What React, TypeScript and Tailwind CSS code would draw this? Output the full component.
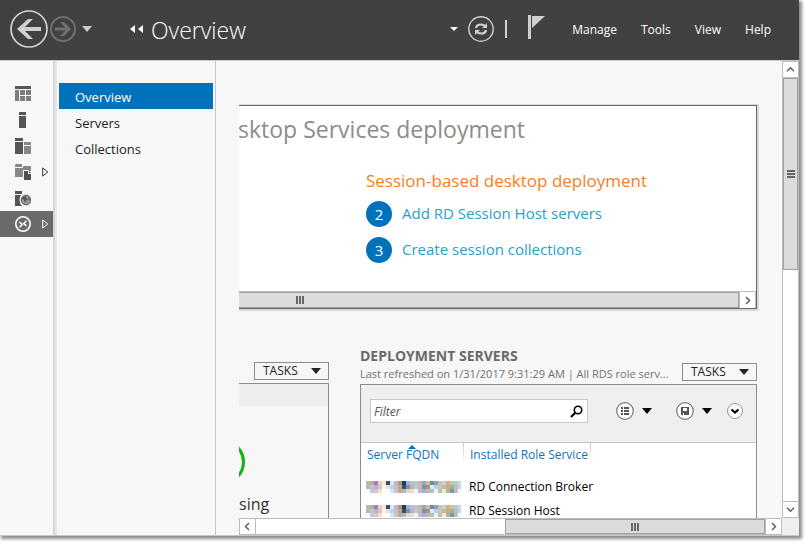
import React from "react";

const MOSAIC: string[][] = [
  ["#bbb9a3", "#b9ae98", "#a77cb8", "#e8d2c0", "#f3ead9", "#35506b", "#d8e6f4", "#bdb9c4", "#a99a80", "#1f3d5c", "#9db2dc", "#b9bfc9", "#b9c4cc", "#d3b6ac", "#8fa9b6", "#cfb9ac", "#6f8da0", "#8fa3b8", "#c9c3bb", "#bcd3e4", "#dfae78", "#c6c6ad", "#bccbc6", "#bcd9ef"],
  ["#bbb9a3", "#bcc6dd", "#c4abcb", "#d7c3cd", "#fbf6ea", "#e6e0ee", "#bcd2ee", "#c9c1bd", "#c9a57e", "#33506c", "#7d94a8", "#b6b6b9", "#b7c9dd", "#d8b2a4", "#649ab4", "#b98f78", "#d7ecf4", "#bccfe6", "#cbc8b5", "#bcb9a5", "#d8a36c", "#8db4bc", "#c0c0ae", "#bcd9ef"],
  ["#fbfbee", "#bccbe2", "#dcc0cc", "#f2e0cc", "#ffffff", "#fbfbe9", "#d6e7fa", "#c4c4d8", "#c7a58e", "#b3b9c2", "#e8d8c8", "#ecdcc6", "#e8fbfb", "#c4b8da", "#b6aaca", "#bcbcbc", "#bcbcbc", "#e6f7f7", "#c1c1b1", "#ececdc", "#b4b795", "#7b9b9b", "#c0c0c0", "#f6f6f6"],
];

function Mosaic() {
  return (
    <svg width="95" height="12" viewBox="0 0 95 12" shapeRendering="crispEdges" className="block" aria-hidden="true">
      {MOSAIC.map((row, y) => row.map((c, x) => <rect key={`${x}-${y}`} x={x * 4} y={y * 4} width="4" height="4" fill={c} />))}
    </svg>
  );
}

function Tri({ className = "" }: { className?: string }) {
  return (
    <svg width="10" height="6" viewBox="0 0 10 6" className={`shrink-0 ${className}`} aria-hidden="true">
      <path d="M0 0h10L5 6z" fill="currentColor" />
    </svg>
  );
}

function Chevron({ d }: { d: string }) {
  return (
    <svg width="9" height="9" viewBox="0 0 9 9" fill="none" stroke="#606060" strokeWidth="1.5" aria-hidden="true">
      <path d={d} />
    </svg>
  );
}

const LEFT = "M6 1L2.5 4.5L6 8";
const RIGHT = "M3 1L6.5 4.5L3 8";
const UP = "M1 6.2L4.5 2.7L8 6.2";
const DOWN = "M1 2.8L4.5 6.3L8 2.8";

function ScrollButton({ d, label, className = "" }: { d: string; label: string; className?: string }) {
  return (
    <button aria-label={label} className={`flex shrink-0 items-center justify-center border border-[#bcbcbc] bg-white ${className}`}>
      <Chevron d={d} />
    </button>
  );
}

function Grip({ vertical = false }: { vertical?: boolean }) {
  return (
    <svg width="8" height="8" viewBox="0 0 8 8" className={vertical ? "rotate-90" : ""} shapeRendering="crispEdges" aria-hidden="true">
      <path d="M0 0h2v8h-2zM3 0h2v8h-2zM6 0h2v8h-2z" fill="#666" />
    </svg>
  );
}

function TasksButton() {
  return (
    <button className="flex h-[18px] w-[75px] shrink-0 items-center justify-between border border-[#8c8c8c] pr-[7px] pl-2 text-[12px] leading-4 text-[#222]">
      TASKS
      <Tri className="text-[#222]" />
    </button>
  );
}

function DashboardIcon() {
  return (
    <svg width="16" height="16" viewBox="0 0 16 16" shapeRendering="crispEdges">
      <path d="M0 0h16v3H0z" fill="#555" />
      <path d="M0 4h4v11H0zM5 4h5v5H5zM11 4h5v5h-5zM5 10h5v5H5zM11 10h5v5h-5z" fill="#7d7d7d" />
    </svg>
  );
}
function ServerIcon() {
  return (
    <svg width="16" height="16" viewBox="0 0 16 16" shapeRendering="crispEdges">
      <path d="M4 0h7v3H4zM4 4h7v12H4z" fill="#555" />
    </svg>
  );
}
function ServersIcon() {
  return (
    <svg width="16" height="16" viewBox="0 0 16 16" shapeRendering="crispEdges">
      <path d="M0 0h8v3H0zM0 4h8v12H0z" fill="#555" />
      <path d="M9 4h7v3H9zM9 8h7v8H9z" fill="#868686" />
    </svg>
  );
}
function FilesIcon() {
  return (
    <svg width="16" height="16" viewBox="0 0 16 16">
      <path d="M1 0h6v3H0V1zM0 4h8V2h8v5h-2l-1-1H8v7H0z" fill="#868686" />
      <path d="M9 7h4v3h3v6H9zM14 7l2 2h-2z" fill="#505050" />
    </svg>
  );
}
function GlobeServerIcon() {
  return (
    <svg width="16" height="16" viewBox="0 0 16 16">
      <path d="M0 1h7v3H0zM0 5h6C4 8 4 13 7 16H0z" fill="#555" />
      <circle cx="11" cy="10" r="4.8" fill="#9a9a9a" stroke="#555" strokeWidth="1" />
      <path d="M8 7l3-1v2l2 1-2 2-1 2-1-3-2-1zM13 7l2 2-1 2z" fill="#555" />
    </svg>
  );
}
function RemoteIcon() {
  return (
    <svg width="16" height="16" viewBox="0 0 16 16" fill="none" stroke="#fff">
      <circle cx="8" cy="8" r="7.2" strokeWidth="1.6" />
      <path d="M4.500 6L7.300 8.600L4.500 11.200M11.500 4.800L8.700 7.400L11.500 10" strokeWidth="1.500" />
    </svg>
  );
}

const RAIL = [
  { label: "Dashboard", icon: <DashboardIcon />, more: false, on: false },
  { label: "Local Server", icon: <ServerIcon />, more: false, on: false },
  { label: "All Servers", icon: <ServersIcon />, more: false, on: false },
  { label: "File and Storage Services", icon: <FilesIcon />, more: true, on: false },
  { label: "IIS", icon: <GlobeServerIcon />, more: false, on: false },
  { label: "Remote Desktop Services", icon: <RemoteIcon />, more: true, on: true },
];

function Header() {
  return (
    <header className="flex h-[61px] shrink-0 items-center border-b border-[#cccccc] bg-[#414141] pb-[2px] text-white">
      <button aria-label="Back" className="ml-[9px]">
        <svg width="40" height="40" viewBox="0 0 40 40" className="block">
          <circle cx="20" cy="20" r="18" fill="none" stroke="#d4d4d4" strokeWidth="1.7" />
          <path d="M8 20L19 10H24L16 18H32V22H16L24 30H19z" fill="#d0d0d0" />
        </svg>
      </button>
      <button aria-label="Forward">
        <svg width="28" height="28" viewBox="0 0 28 28" className="block">
          <circle cx="14" cy="14" r="12" fill="none" stroke="#6f6f6f" strokeWidth="2" />
          <path d="M22 14L15 7H11L16.500 12.500H6V15.500H16.500L11 21H15z" fill="#707070" />
        </svg>
      </button>
      <button aria-label="History" className="ml-[5px] text-[#cccccc]">
        <Tri />
      </button>
      <svg width="14" height="8" viewBox="0 0 14 8" className="ml-[38px]" aria-hidden="true">
        <path d="M5 0v8L0 4zM13 0v8L8 4z" fill="#fff" />
      </svg>
      <h1 className="ml-[7px] pt-[2px] text-[23px] leading-8 font-light">Overview</h1>
      <div className="ml-auto flex items-center">
        <button aria-label="Locations">
          <svg width="8" height="4" viewBox="0 0 8 4" className="block">
            <path d="M0 0h8L4 4z" fill="#fff" />
          </svg>
        </button>
        <button aria-label="Refresh" className="ml-[9px]">
          <svg width="28" height="28" viewBox="0 0 28 28" fill="none" stroke="#d0d0d0" className="block">
            <circle cx="14" cy="14" r="12.200" strokeWidth="1.400" />
            <path d="M9 13Q9.500 9.500 14 9.500Q16.500 9.500 18.500 11.500M19 15Q18.500 18.500 14 18.500Q11.500 18.500 9.500 16.500" strokeWidth="2.200" />
            <path d="M20 8v5h-5zM8 20v-5h5z" fill="#d0d0d0" stroke="none" />
          </svg>
        </button>
        <span className="ml-[10px] h-[18px] w-[2px] bg-[#d0d0d0]" />
        <button aria-label="Notifications" className="ml-5">
          <svg width="20" height="28" viewBox="0 0 20 28" className="block">
            <path d="M1 0h3v24H1zM5 1h13L5 13z" fill="#d0d0d0" />
          </svg>
        </button>
        <nav className="ml-[25px] flex gap-6 pt-[2px] pr-7 text-[12px] leading-4">
          <button>Manage</button>
          <button>Tools</button>
          <button>View</button>
          <button>Help</button>
        </nav>
      </div>
    </header>
  );
}

function Quick() {
  return (
    <section className="mr-[23px] border-y border-r-2 border-b-2 border-[#d9d9d9]">
      <div className="border-y border-r border-[#666] bg-white">
        <div className="h-[185px]">
          <h2 className="flex w-[286px] justify-end overflow-hidden pt-[7px] text-[23px] leading-8 whitespace-nowrap text-[#8c8c8c]">
            Desktop Services deployment
          </h2>
          <div className="pt-6 pl-[127px]">
            <h3 className="text-[17px] leading-6 text-[#fb7d1e]">Session-based desktop deployment</h3>
            <ol className="flex flex-col gap-[10px] pt-2 text-[15px] leading-6 text-[#2a9fc9]">
              <li className="flex h-[26px] items-center gap-[10px]">
                <span className="flex size-[26px] items-center justify-center rounded-full bg-[#0072bc] pb-px text-white">2</span>
                <a href="#hosts" className="pb-[2px]">Add RD Session Host servers</a>
              </li>
              <li className="flex h-[26px] items-center gap-[10px]">
                <span className="flex size-[26px] items-center justify-center rounded-full bg-[#0072bc] pb-px text-white">3</span>
                <a href="#collections" className="pb-[2px]">Create session collections</a>
              </li>
            </ol>
          </div>
        </div>
        <div className="flex h-[17px] border-t border-[#bcbcbc]">
          <div className="flex flex-1 items-center border-y border-r border-[#a0a0a0] bg-[#dcdcdc] pl-[57px]">
            <Grip />
          </div>
          <ScrollButton d={RIGHT} label="Scroll steps right" className="w-[17px] border-y-0" />
        </div>
      </div>
    </section>
  );
}

function Status() {
  return (
    <section className="flex w-[90px] shrink-0 flex-col">
      <div className="flex h-[38px] shrink-0 items-end justify-end pb-[3px]">
        <TasksButton />
      </div>
      <div className="flex-1 border-t border-r border-[#8c8c8c]">
        <div className="h-[22px] bg-[#eeeeee]" />
        <svg width="8" height="52" viewBox="18 0 8 52" className="mt-[30px] block" aria-hidden="true">
          <circle cx="1" cy="26" r="21.500" fill="none" stroke="#10b410" strokeWidth="3" />
        </svg>
        <p className="pt-1 text-[16px] leading-6 text-[#333]">sing</p>
      </div>
    </section>
  );
}

function Servers() {
  return (
    <section className="flex min-w-0 flex-1 flex-col">
      <div className="flex h-[38px] shrink-0 items-end justify-between gap-1">
        <div className="min-w-0">
          <h2 className="text-[14px] leading-[18px] font-bold whitespace-nowrap text-[#6a6a6a]">DEPLOYMENT SERVERS</h2>
          <p className="truncate text-[11px] leading-[18px] text-[#707070]">
            Last refreshed on 1/31/2017 9:31:29 AM <span className="text-[#4f8f8f]">|</span> All RDS role serv...
          </p>
        </div>
        <div className="pb-[2px]">
          <TasksButton />
        </div>
      </div>
      <div className="mt-px flex-1 border-t border-r border-l border-[#8c8c8c] bg-white">
        <div className="flex h-[58px] items-center border-b border-[#c4c4c4] bg-[#efefef] pb-[5px] pl-[9px]">
          <div className="flex h-6 w-[218px] items-center border border-[#c8c8c8] bg-white pr-1">
            <input aria-label="Filter" placeholder="Filter" className="h-full min-w-0 flex-1 pl-[3px] text-[12px] italic outline-none placeholder:text-[#555]" />
            <svg width="13" height="13" viewBox="0 0 13 13" fill="none" stroke="#000" aria-hidden="true">
              <circle cx="8" cy="5" r="3.700" strokeWidth="1.600" />
              <path d="M5.500 7.500L1 12" strokeWidth="2.200" />
            </svg>
          </div>
          <button aria-label="Saved filters" className="ml-7">
            <svg width="18" height="18" viewBox="0 0 18 18" className="block">
              <circle cx="9" cy="9" r="8.300" fill="#fff" stroke="#777" strokeWidth="1.200" />
              <path d="M5 5h2v2H5zM8 5h5v2H8zM5 8h2v2H5zM8 8h5v2H8zM5 11h2v2H5zM8 11h5v2H8z" fill="#555" />
            </svg>
          </button>
          <Tri className="ml-2" />
          <button aria-label="Save filter" className="ml-6">
            <svg width="18" height="18" viewBox="0 0 18 18" className="block">
              <circle cx="9" cy="9" r="8.300" fill="#fff" stroke="#777" strokeWidth="1.200" />
              <path fillRule="evenodd" d="M5 5h8v8H5zM7 6v3h4V6zM7 11v2h1v-2z" fill="#555" />
            </svg>
          </button>
          <Tri className="ml-2" />
          <button aria-label="Expand" className="ml-[14px]">
            <svg width="18" height="18" viewBox="0 0 18 18" className="block">
              <circle cx="9" cy="9" r="7.500" fill="#fff" stroke="#999" />
              <path d="M5.500 7.500L9 10.500L12.500 7.500" fill="none" stroke="#000" strokeWidth="2.200" />
            </svg>
          </button>
        </div>
        <table className="w-full table-fixed text-left text-[12px] leading-4">
          <thead>
            <tr className="h-8 align-top font-normal text-[#1173bb]">
              <th className="relative w-[102px] pt-1 pl-[6px] font-normal whitespace-nowrap">
                <svg width="8" height="4" viewBox="0 0 8 4" className="absolute top-[2px] left-[47px]" aria-hidden="true">
                  <path d="M4 0L8 4H0z" fill="#0072bc" />
                </svg>
                Server FQDN
              </th>
              <th className="w-[128px] font-normal whitespace-nowrap">
                <div className="h-5 bg-linear-to-b from-[#c8c8c8] to-white px-px">
                  <div className="h-full bg-white pt-1 pl-[6px]">Installed Role Service</div>
                </div>
              </th>
              <th aria-label="More" />
            </tr>
          </thead>
          <tbody className="text-black">
            <tr className="h-6">
              <td className="pl-[5px]"><Mosaic /></td>
              <td className="pl-[6px] whitespace-nowrap">RD Connection Broker</td>
              <td />
            </tr>
            <tr className="h-6">
              <td className="pl-[5px]"><Mosaic /></td>
              <td className="pl-[6px] whitespace-nowrap">RD Session Host</td>
              <td />
            </tr>
          </tbody>
        </table>
      </div>
    </section>
  );
}

export default function App() {
  return (
    <div className="flex h-screen bg-white pr-[9px] pb-2 font-['Open_Sans','Noto_Sans',sans-serif]">
      <div className="flex min-w-0 flex-1 flex-col border-b border-[#c8c8c8] bg-[#f7f7f7] shadow-[2px_2px_3px_1px_rgba(0,0,0,0.45)]">
        <Header />
        <div className="flex min-h-0 flex-1">
          <nav aria-label="Roles" className="w-[53px] shrink-0 pt-5">
            {RAIL.map((r) => (
              <button key={r.label} aria-label={r.label} className={`flex h-[26px] w-full items-center pl-[15px] ${r.on ? "bg-[#6a6a6a] text-white" : "text-[#333]"}`}>
                {r.icon}
                {r.more && (
                  <svg width="7" height="10" viewBox="0 0 7 10" className="ml-[11px]" fill="none" stroke="currentColor">
                    <path d="M.7 1L5.800 5L.7 9z" />
                  </svg>
                )}
              </button>
            ))}
          </nav>
          <div className="w-1 shrink-0 border-r-2 border-l-2 border-l-[#d6d6d6] border-r-[#e8e8e8]" />
          <nav aria-label="Pages" className="flex w-[159px] shrink-0 flex-col border-r border-[#c8c8c8] px-[2px] pt-[22px] text-[13px] leading-[26px] text-[#222]">
            <a href="#overview" className="h-[26px] bg-[#0072bc] pt-px pl-4 text-white">Overview</a>
            <a href="#servers" className="h-[26px] pt-px pl-4">Servers</a>
            <a href="#collections" className="h-[26px] pt-px pl-4">Collections</a>
          </nav>
          <main className="flex min-w-0 flex-1 flex-col pl-[23px]">
            <div className="flex min-h-0 flex-1">
              <div className="flex min-w-0 flex-1 flex-col overflow-hidden pt-[43px]">
                <Quick />
                <div className="flex min-h-0 flex-1 gap-[31px] pt-[34px] pr-[25px]">
                  <Status />
                  <Servers />
                </div>
              </div>
              <div className="flex w-[17px] shrink-0 flex-col border-x border-[#bcbcbc] bg-white">
                <ScrollButton d={UP} label="Scroll up" className="h-[17px] border-x-0" />
                <div className="flex h-[192px] items-center justify-center border border-[#a0a0a0] bg-[#dcdcdc]">
                  <Grip vertical />
                </div>
                <ScrollButton d={DOWN} label="Scroll down" className="mt-auto h-[17px] border-x-0" />
              </div>
            </div>
            <div className="flex h-[17px] shrink-0 bg-[#efefef] pr-[17px]">
              <div className="flex flex-1 border-y border-[#bcbcbc] bg-white">
                <ScrollButton d={LEFT} label="Scroll left" className="w-[17px] border-y-0" />
                <div className="flex-1" />
                <div className="flex w-[260px] items-center justify-center border border-[#a0a0a0] bg-[#dcdcdc]">
                  <Grip />
                </div>
                <ScrollButton d={RIGHT} label="Scroll right" className="w-[17px] border-y-0" />
              </div>
            </div>
          </main>
        </div>
      </div>
    </div>
  );
}
